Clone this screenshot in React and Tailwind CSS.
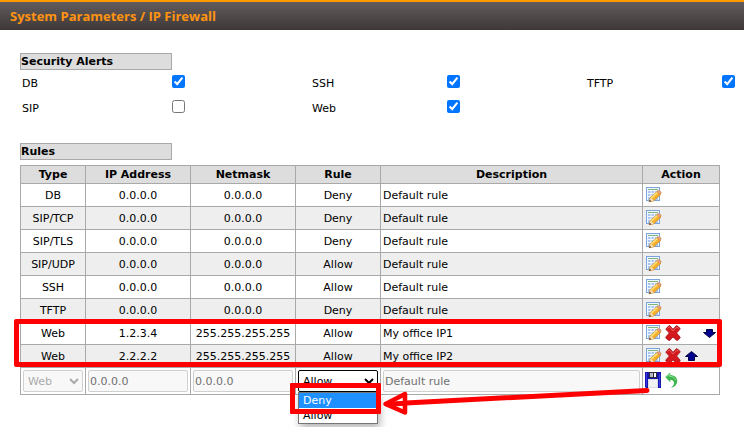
import { useState } from 'react';

const alerts = [
    { name: 'DB', on: true },
    { name: 'SSH', on: true },
    { name: 'TFTP', on: true },
    { name: 'SIP', on: false },
    { name: 'Web', on: true },
];

const rules = [
    { type: 'DB', ip: '0.0.0.0', mask: '0.0.0.0', rule: 'Deny', desc: 'Default rule' },
    { type: 'SIP/TCP', ip: '0.0.0.0', mask: '0.0.0.0', rule: 'Deny', desc: 'Default rule' },
    { type: 'SIP/TLS', ip: '0.0.0.0', mask: '0.0.0.0', rule: 'Deny', desc: 'Default rule' },
    { type: 'SIP/UDP', ip: '0.0.0.0', mask: '0.0.0.0', rule: 'Allow', desc: 'Default rule' },
    { type: 'SSH', ip: '0.0.0.0', mask: '0.0.0.0', rule: 'Allow', desc: 'Default rule' },
    { type: 'TFTP', ip: '0.0.0.0', mask: '0.0.0.0', rule: 'Deny', desc: 'Default rule' },
    { type: 'Web', ip: '1.2.3.4', mask: '255.255.255.255', rule: 'Allow', desc: 'My office IP1', custom: true, move: 'down' },
    { type: 'Web', ip: '2.2.2.2', mask: '255.255.255.255', rule: 'Allow', desc: 'My office IP2', custom: true, move: 'up' },
];

const EditIcon = () => (
    <svg width="16" height="16" viewBox="0 0 16 16">
        <rect x="0.5" y="0.5" width="13" height="13" fill="#f2f7fe" stroke="#7ba4de" />
        <path d="M2 2.500h10" stroke="#7fb57a" />
        <path d="M2 4h10v9H2z" fill="#a9c7f2" />
        <path d="M2 6.500h10M2 9.500h10M5 4v9M8.500 4v9" stroke="#f2f7fe" strokeWidth="1" />
        <path d="M3 14.800l1.200-4.200 7.400-6.600 3.400 3.200-7.400 6.800z" fill="#f5b02e" stroke="#c4842a" strokeWidth="0.6" />
        <path d="M5.400 10.800l6.600-5.800" stroke="#ffe07a" strokeWidth="1.600" />
        <path d="M11 4.800l1.200-1.100q.8-.5 1.600.2l1.200 1.200q.5.7-.2 1.400l-1 .9z" fill="#e8a27c" stroke="#c07848" strokeWidth="0.5" />
        <path d="M4.500 10.600l3.400 3-4.800 1.300z" fill="#f4dcb4" />
        <path d="M3.800 12.800l1.600 1.400-2.400.8z" fill="#4a3520" />
    </svg>
);

const DeleteIcon = () => (
    <svg width="16" height="16" viewBox="0 0 16 16">
        <path d="M1.200 3.600L3.800.8q.7-.5 1.400.2L8 4.300 11 1q.7-.6 1.400 0l2.400 2q.6.7 0 1.400L11.600 8l3.400 4q.5.7-.1 1.300l-2.200 2q-.8.4-1.400-.2L8 12l-3 3.200q-.7.6-1.500.1L1 13.200q-.5-.7 0-1.400L4.300 8 1.100 4.600q-.4-.5.1-1z" fill="#d3191d" stroke="#a31215" strokeWidth="0.8" />
        <path d="M2.500 3.600l1.900-1.800L8 6l3.800-4 1.800 1.600" fill="none" stroke="#ec7474" strokeWidth="0.8" />
    </svg>
);

const ArrowIcon = ({ dir }) => (
    <svg width="16" height="16" viewBox="0 0 16 16">
        {dir === 'down'
            ? <path d="M3.500 4.500h6v3h3L6.500 12.500 0.500 7.500h3z" fill="#000090" stroke="#000040" />
            : <path d="M4.500 12.500h6v-4H13.500L7.500 3.500 1.500 8.500h3z" fill="#000090" stroke="#000040" />}
    </svg>
);

const SaveIcon = () => (
    <svg width="16" height="16" viewBox="0 0 16 16">
        <path d="M0 0h16v16H1l-1-1z" fill="#1616ad" />
        <path d="M1.500 1v13.500M14.500 2v13" stroke="#3a3ae6" />
        <rect x="4" y="0" width="8" height="6" fill="#2b2b3a" />
        <rect x="5" y="1" width="3" height="4" fill="#b9b9c4" />
        <rect x="9" y="1" width="2" height="4" fill="#fff" />
        <rect x="3" y="7" width="10" height="9" fill="#dcdce2" />
        <rect x="4" y="8" width="8" height="7" fill="#f1f1f1" />
    </svg>
);

const UndoIcon = () => (
    <svg width="16" height="16" viewBox="0 0 16 16">
        <path d="M1.200 5L6.300.6v2.500c4.800.4 7.200 3 6.900 6.300-.3 3.400-2.700 5.600-6.200 6.400 2.400-1.700 3.400-3.800 2.900-5.700-.4-1.500-1.600-2.300-3.600-2.400v2.500z" fill="#3fb54e" />
        <path d="M2.200 5L5.600 2.200v2.100c3.600 0 5.600 1.700 6 3.900" fill="none" stroke="#8fe098" strokeWidth="0.9" />
    </svg>
);

const SectionTitle = ({ children }) => (
    <h2 className="w-[152px] h-[17px] leading-[15px] font-bold bg-[#dddddd] border border-[#a9a9a9]">{children}</h2>
);

const cell = "border border-[#a9a9a9] p-0";
const textCell = "border border-[#a9a9a9] p-0 pt-0.5";
const field = "block w-full h-[22px] rounded-[2px] border border-[#d0d0d0] bg-[#f8f8f8] text-[#707070]";

const App = () => {

    const [checked, setChecked] = useState(alerts.map((a) => a.on));
    const [newRule, setNewRule] = useState('Allow');

    const toggle = (i) => {
        setChecked(checked.map((c, n) => (n === i ? !c : c)));
    }

    return (
        <div className="min-h-screen bg-white text-black text-[11px] font-['Verdana','DejaVu_Sans',sans-serif]">
            <header className="h-[30px] pl-[10px] border-t-2 border-[#ff9900] bg-linear-to-b from-[#625d5c] to-[#3e3938]">
                <h1 className="leading-[28px] text-[13px] font-bold text-[#ff9311] font-['Open_Sans','Noto_Sans',sans-serif]">System Parameters / IP Firewall</h1>
            </header>

            <main className="pt-[23px] pl-5 pr-6 pb-8">
                <SectionTitle>Security Alerts</SectionTitle>
                <div className="pl-0.5 pt-[5px] grid grid-cols-[290px_275px_150px]">
                    {alerts.map((a, i) => (
                        <div key={a.name} className="h-[25px] flex items-start justify-between pr-[127px] nth-[3n]:pr-0.5">
                            <label htmlFor={`alert-${a.name}`} className="leading-[18px]">{a.name}</label>
                            <input id={`alert-${a.name}`} type="checkbox" checked={checked[i]} onChange={() => toggle(i)} className="size-[13px]" />
                        </div>
                    ))}
                </div>

                <div className="pt-[18px]">
                    <SectionTitle>Rules</SectionTitle>
                </div>

                <div className="relative mt-[5px]">
                    <table className="w-full table-fixed border-collapse text-center">
                        <colgroup>
                            <col className="w-[65px]" />
                            <col className="w-[105px]" />
                            <col className="w-[105px]" />
                            <col className="w-[85px]" />
                            <col />
                            <col className="w-[77px]" />
                        </colgroup>
                        <thead>
                            <tr className="h-[18px] bg-[#dddddd] leading-[17px]">
                                {['Type', 'IP Address', 'Netmask', 'Rule', 'Description', 'Action'].map((h) => (
                                    <th key={h} className={cell}>{h}</th>
                                ))}
                            </tr>
                        </thead>
                        <tbody>
                            {rules.map((r, i) => (
                                <tr key={i} className="h-[23px] leading-[20px] even:bg-[#eeeeee]">
                                    <td className={textCell}>{r.type}</td>
                                    <td className={textCell}>{r.ip}</td>
                                    <td className={textCell}>{r.mask}</td>
                                    <td className={textCell}>{r.rule}</td>
                                    <td className={`${textCell} text-left`}><span className="pl-0.5">{r.desc}</span></td>
                                    <td className={cell}>
                                        <div className="flex items-center gap-[3px] pl-[3px]">
                                            <button aria-label="Edit"><EditIcon /></button>
                                            {r.custom && <button aria-label="Delete"><DeleteIcon /></button>}
                                            {r.move === 'down' && <button aria-label="Move down" className="ml-auto"><ArrowIcon dir="down" /></button>}
                                            {r.move === 'up' && <button aria-label="Move up"><ArrowIcon dir="up" /></button>}
                                        </div>
                                    </td>
                                </tr>
                            ))}
                            <tr className="h-[27px]">
                                <td className={cell}>
                                    <div className="px-0.5">
                                        <select disabled aria-label="Type" className={`${field} text-[#aaaaaa]!`}>
                                            <option>Web</option>
                                        </select>
                                    </div>
                                </td>
                                <td className={cell}>
                                    <div className="px-0.5">
                                        <input disabled aria-label="IP Address" defaultValue="0.0.0.0" className={`${field} px-px`} />
                                    </div>
                                </td>
                                <td className={cell}>
                                    <div className="px-0.5">
                                        <input disabled aria-label="Netmask" defaultValue="0.0.0.0" className={`${field} px-px`} />
                                    </div>
                                </td>
                                <td className={cell}>
                                    <div className="relative px-0.5">
                                        <select aria-label="Rule" value={newRule} onChange={(e) => setNewRule(e.target.value)}
                                            className="block w-full h-[22px] rounded-[2px] border border-black bg-white">
                                            <option>Deny</option>
                                            <option>Allow</option>
                                        </select>
                                        {/* Opened list of the rule drop-down */}
                                        <ul className="absolute top-[22px] inset-x-0.5 border border-[#767676] bg-white text-left leading-[15px] shadow-[2px_4px_8px_rgba(0,0,0,0.3)]">
                                            <li className="pl-1 bg-[#1e90ff] text-white">Deny</li>
                                            <li className="pl-1">Allow</li>
                                        </ul>
                                    </div>
                                </td>
                                <td className={cell}>
                                    <div className="px-0.5">
                                        <input disabled aria-label="Description" defaultValue="Default rule" className={`${field} px-px`} />
                                    </div>
                                </td>
                                <td className={cell}>
                                    <div className="flex items-center gap-[3px] pl-0.5 pb-0.5">
                                        <button aria-label="Save"><SaveIcon /></button>
                                        <button aria-label="Cancel"><UndoIcon /></button>
                                    </div>
                                </td>
                            </tr>
                        </tbody>
                    </table>

                    {/* Red marks over the table */}
                    <div className="pointer-events-none absolute top-[154px] -left-1.5 -right-0.5 h-12 rounded-[2px] border-5 border-[#ff0000]" />
                    <div className="pointer-events-none absolute top-[218px] left-[270px] w-[91px] h-[31px] rounded-[1px] border-5 border-[#ff0000]" />
                    <svg className="pointer-events-none absolute top-[215px] left-[360px]" width="280" height="40" viewBox="0 0 280 40">
                        <path d="M267 10.500L26 23" fill="none" stroke="#ff0000" strokeWidth="5" strokeLinecap="round" />
                        <path d="M5.500 24L25 14V32.500z" fill="#fff" stroke="#ff0000" strokeWidth="4.500" strokeLinejoin="round" />
                        <path d="M26 23.200L6 24.200" stroke="#ff0000" strokeWidth="5" />
                    </svg>
                </div>
            </main>
        </div>
    )
}

export default App;
